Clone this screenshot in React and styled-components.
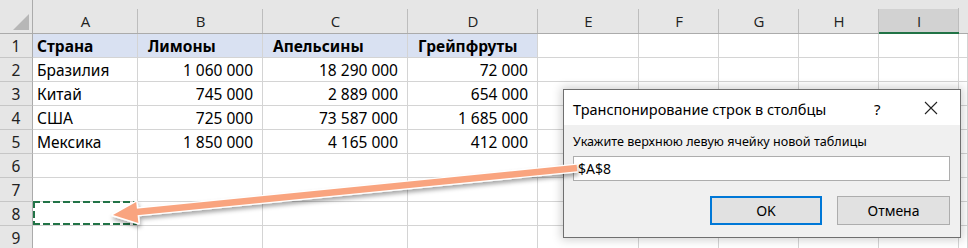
import React from "react";
import styled, { createGlobalStyle } from "styled-components";

const Global = createGlobalStyle`
  html, body { margin: 0; padding: 0; background: #ffffff; }
  body { width: 968px; height: 248px; overflow: hidden; }
`;

const Page = styled.div`
  position: relative;
  width: 968px;
  height: 248px;
  overflow: hidden;
  font-family: "Noto Sans", "Open Sans", sans-serif;
`;

const Sheet = styled.div`
  display: grid;
  grid-template-columns: 33px 105px 125px 145px 130px 101px 80px 80px 80px 80px 1fr;
  grid-template-rows: 34px;
  grid-auto-rows: 24px;
  font-family: "Noto Sans", sans-serif;
  font-size: 15.5px;
  color: #000;
`;

const Corner = styled.div`
  background: #e6e6e6;
  border-right: 1px solid #ababab;
  border-bottom: 1px solid #ababab;
  display: flex;
  align-items: flex-end;
  justify-content: flex-end;
  padding: 0 3px 3px 0;
  box-sizing: border-box;
`;

const ColHead = styled.div`
  box-sizing: border-box;
  border-bottom: ${(p) => (p.$selected ? "2px solid #217346" : "1px solid #ababab")};
  background: ${(p) =>
    p.$selected
      ? "linear-gradient(#bdbdbd, #bdbdbd) right bottom / 1px 24px no-repeat, linear-gradient(#d2d2d2, #d2d2d2) left bottom / 100% 23px no-repeat, #e6e6e6"
      : p.$last
      ? "#e6e6e6"
      : "linear-gradient(#bdbdbd, #bdbdbd) right bottom / 1px 24px no-repeat, #e6e6e6"};
  display: flex;
  align-items: flex-end;
  justify-content: center;
  padding-bottom: ${(p) => (p.$selected ? "1px" : "2px")};
  line-height: 20px;
  color: #222;
  font-family: "Open Sans", "Noto Sans", sans-serif;
  font-size: 15px;
`;

const RowHead = styled.div`
  box-sizing: border-box;
  background: #e6e6e6;
  border-right: 1px solid #ababab;
  border-bottom: 1px solid #c6c6c6;
  display: flex;
  align-items: center;
  justify-content: center;
  color: #222;
`;

const Cell = styled.div`
  position: relative;
  box-sizing: border-box;
  border-right: 1px solid #d4d4d4;
  border-bottom: 1px solid #d4d4d4;
  background: ${(p) => (p.$head ? "#d9e1f2" : "#ffffff")};
  font-weight: ${(p) => (p.$head ? 700 : 400)};
  display: flex;
  align-items: center;
  justify-content: ${(p) => (p.$right ? "flex-end" : "flex-start")};
  padding: ${(p) => (p.$right ? "0 9px 0 0" : p.$indent ? "0 0 0 10px" : "0 0 0 4px")};
  white-space: nowrap;
  line-height: 20px;
  ${(p) =>
    p.$marquee &&
    `
    &::after {
      content: "";
      position: absolute;
      top: -1px; left: 0; right: 0; bottom: 0;
      background:
        repeating-linear-gradient(90deg, #217346 0 7px, transparent 7px 10px) left top / 100% 2px no-repeat,
        repeating-linear-gradient(90deg, #217346 0 7px, transparent 7px 10px) left bottom / 100% 2px no-repeat,
        repeating-linear-gradient(180deg, #217346 0 7px, transparent 7px 10px) left top / 2px 100% no-repeat,
        repeating-linear-gradient(180deg, #217346 0 7px, transparent 7px 10px) right top / 2px 100% no-repeat;
    }
  `}
`;

const Dialog = styled.div`
  position: absolute;
  left: 563px;
  top: 89px;
  width: 398px;
  height: 149px;
  box-sizing: border-box;
  border: 1px solid #6f6f6f;
  background: #f0f0f0;
  box-shadow: 0 0 9px 2px rgba(0, 0, 0, 0.18);
  display: flex;
  flex-direction: column;
  font-family: "Noto Sans", "Open Sans", sans-serif;
  color: #000;
`;

const TitleBar = styled.div`
  height: 35px;
  background: #ffffff;
  display: flex;
  align-items: center;
  padding: 0 0 0 9px;
  font-size: 14.5px;
`;

const Title = styled.div`
  flex: 1;
  padding-top: 2px;
`;

const Help = styled.div`
  width: 34px;
  font-size: 15px;
  text-align: left;
  padding-top: 2px;
`;

const Close = styled.div`
  width: 46px;
  height: 35px;
  display: flex;
  align-items: center;
  justify-content: center;
  margin-right: 6px;
`;

const Body = styled.div`
  flex: 1;
  display: flex;
  flex-direction: column;
  padding: 8px 10px 0 9px;
`;

const Label = styled.div`
  font-size: 12.6px;
  line-height: 18px;
  margin-bottom: 5px;
`;

const Input = styled.div`
  height: 25px;
  box-sizing: border-box;
  background: #fff;
  border: 1px solid #adadad;
  display: flex;
  align-items: center;
  padding-left: 4px;
  font-size: 14px;
`;

const Buttons = styled.div`
  display: flex;
  justify-content: flex-end;
  gap: 15px;
  margin-top: 15px;
`;

const Button = styled.div`
  width: ${(p) => (p.$w ? p.$w : 112)}px;
  height: 29px;
  box-sizing: border-box;
  background: #e1e1e1;
  border: ${(p) => (p.$default ? "2px solid #0078d7" : "1px solid #adadad")};
  display: flex;
  align-items: center;
  justify-content: center;
  font-size: 14px;
`;

const Overlay = styled.svg`
  position: absolute;
  left: 0;
  top: 0;
  pointer-events: none;
`;

const columns = ["A", "B", "C", "D", "E", "F", "G", "H", "I"];

const data = [
  ["Страна", "Лимоны", "Апельсины", "Грейпфруты"],
  ["Бразилия", "1 060 000", "18 290 000", "72 000"],
  ["Китай", "745 000", "2 889 000", "654 000"],
  ["США", "725 000", "73 587 000", "1 685 000"],
  ["Мексика", "1 850 000", "4 165 000", "412 000"],
];

export default function App() {
  const rows = [];
  for (let r = 1; r <= 9; r++) {
    const rowData = data[r - 1];
    rows.push(<RowHead key={"rh" + r}>{r}</RowHead>);
    for (let c = 0; c < 10; c++) {
      const value = rowData && c < 4 ? rowData[c] : "";
      const isHead = r === 1 && c < 4;
      rows.push(
        <Cell
          key={r + "-" + c}
          $head={isHead}
          $right={!isHead && c > 0 && c < 4}
          $indent={isHead && c > 0}
          $marquee={r === 8 && c === 0}
        >
          {value}
        </Cell>
      );
    }
  }

  return (
    <Page>
      <Global />
      <Sheet>
        <Corner>
          <svg width="16" height="16" viewBox="0 0 16 16">
            <polygon points="16,0 16,16 0,16" fill="#b7b7b7" />
          </svg>
        </Corner>
        {columns.map((c) => (
          <ColHead key={c} $selected={c === "I"}>
            {c}
          </ColHead>
        ))}
        <ColHead $last />
        {rows}
      </Sheet>

      <Dialog>
        <TitleBar>
          <Title>Транспонирование строк в столбцы</Title>
          <Help>?</Help>
          <Close>
            <svg width="14" height="14" viewBox="0 0 14 14">
              <path d="M1 1 L13 13 M13 1 L1 13" stroke="#222" strokeWidth="1.1" fill="none" />
            </svg>
          </Close>
        </TitleBar>
        <Body>
          <Label>Укажите верхнюю левую ячейку новой таблицы</Label>
          <Input>$A$8</Input>
          <Buttons>
            <Button $default>OK</Button>
            <Button $w={113}>Отмена</Button>
          </Buttons>
        </Body>
      </Dialog>

      <Overlay width="968" height="248" viewBox="0 0 968 248">
        <defs>
          <filter id="sh" x="-10%" y="-50%" width="120%" height="200%">
            <feDropShadow dx="1" dy="3" stdDeviation="2" floodColor="#000" floodOpacity="0.35" />
          </filter>
        </defs>
        <g filter="url(#sh)">
          <line x1="577" y1="168" x2="134" y2="212.3" stroke="#ffffff" strokeWidth="9" />
          <polygon points="113,215 138.4,223 136.2,202" fill="#ffffff" stroke="#ffffff" strokeWidth="3" strokeLinejoin="round" />
        </g>
        <line x1="577" y1="168" x2="134" y2="212.3" stroke="#f9a47f" strokeWidth="6.5" />
        <polygon points="113,215 138.4,223 136.2,202" fill="#f9a47f" />
      </Overlay>
    </Page>
  );
}
